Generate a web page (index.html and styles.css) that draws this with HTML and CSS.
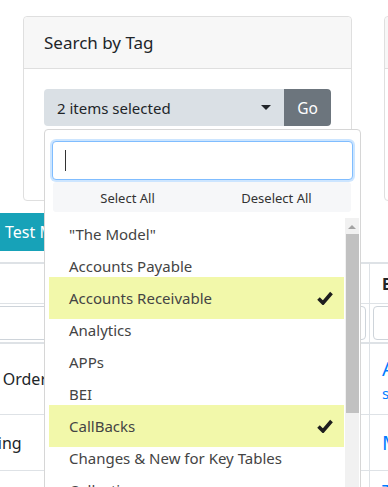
FILE: index.html
```html
<!DOCTYPE html>
<html lang="en">
<head>
  <meta charset="UTF-8" />
  <meta name="viewport" content="width=device-width, initial-scale=1.0"/>
  <title>Search by Tag</title>
  <link rel="stylesheet" href="styles.css">
</head>
<body>
  <div class="top-row">
    <div class="card tag-card">
      <div class="card-header">Search by Tag</div>
      <div class="card-body">
        <div class="tag-picker">
          <div class="input-group">
            <button class="select-toggle" type="button">
              <span>2 items selected</span>
              <span class="caret"></span>
            </button>
            <button class="btn-go" type="button">Go</button>
          </div>

          <!-- open multiselect menu -->
          <div class="dropdown">
            <div class="search-box">
              <input type="text" class="search-input">
            </div>
            <div class="actions">
              <button type="button">Select All</button>
              <button type="button">Deselect All</button>
            </div>
            <div class="list-wrap">
              <ul class="options">
                <li>"The Model"</li>
                <li>Accounts Payable</li>
                <li class="selected">Accounts Receivable <svg class="check" viewBox="0 0 16 14"><path d="M1.5 7.5 L6 12 L14.5 2" /></svg></li>
                <li>Analytics</li>
                <li>APPs</li>
                <li>BEI</li>
                <li class="selected">CallBacks <svg class="check" viewBox="0 0 16 14"><path d="M1.5 7.5 L6 12 L14.5 2" /></svg></li>
                <li>Changes &amp; New for Key Tables</li>
                <li>Collections</li>
                <li>Customers</li>
                <li>Dashboards</li>
                <li>Data Quality</li>
                <li>Finance</li>
                <li>General Ledger</li>
              </ul>
              <div class="scrollbar">
                <div class="scroll-up"></div>
                <div class="scroll-thumb"></div>
              </div>
            </div>
          </div>
        </div>
      </div>
    </div>
    <div class="card side-card">
      <div class="card-header">&nbsp;</div>
    </div>
  </div>

  <div class="results">
    <div class="toolbar">
      <button class="btn-test" type="button">Test Mode</button>
    </div>
    <table class="report">
      <thead>
        <tr>
          <th class="col-name"><span class="sort"></span></th>
          <th class="col-desc">Business</th>
        </tr>
        <tr class="filters">
          <th class="col-name"><input type="text"></th>
          <th class="col-desc"><input type="text"></th>
        </tr>
      </thead>
      <tbody>
        <tr class="tall">
          <td class="col-name">Sales Orders</td>
          <td class="col-desc"><a href="#" class="big">AR</a><br><a href="#">see details</a></td>
        </tr>
        <tr class="mid">
          <td class="col-name">Banking</td>
          <td class="col-desc"><a href="#" class="big">Margin</a></td>
        </tr>
        <tr>
          <td class="col-name">Tax</td>
          <td class="col-desc"><a href="#" class="big">Tax</a></td>
        </tr>
      </tbody>
    </table>
  </div>
</body>
</html>
```

FILE: styles.css
```css
html, body {
  margin: 0;
  padding: 0;
}

body {
  font-family: "Noto Sans", "Open Sans", sans-serif;
  color: #212529;
  background: #fff;
  overflow: hidden;
}

button {
  font-family: inherit;
  border: none;
  cursor: pointer;
}

/* top cards */
.top-row {
  display: flex;
  gap: 32px;
  padding: 16px 0 0 23px;
}

.card {
  border: 1px solid #dfdfdf;
  border-radius: 4px;
  background: #fff;
  flex-shrink: 0;
}

.tag-card {
  width: 327px;
  height: 183px;
}

.side-card {
  width: 300px;
  height: 183px;
}

.card-header {
  background: #f7f7f7;
  border-bottom: 1px solid #dfdfdf;
  padding: 12px 20px;
  font-size: 17px;
  line-height: 27px;
  border-radius: 4px 4px 0 0;
}

.card-body {
  padding: 20px;
}

.tag-picker {
  position: relative;
}

.input-group {
  display: flex;
  height: 37px;
}

.select-toggle {
  width: 241px;
  display: flex;
  align-items: center;
  justify-content: space-between;
  padding: 0 13px;
  background: #dae0e5;
  color: #212529;
  font-size: 15px;
  border-radius: 4px 0 0 4px;
}

.caret {
  width: 0;
  height: 0;
  border-left: 5px solid transparent;
  border-right: 5px solid transparent;
  border-top: 5px solid #212529;
}

.btn-go {
  width: 47px;
  background: #6c757d;
  color: #fff;
  font-size: 15.5px;
  border-radius: 0 4px 4px 0;
}

/* dropdown menu */
.dropdown {
  position: absolute;
  top: 40px;
  left: 0;
  width: 314px;
  height: 400px;
  background: #fff;
  border: 1px solid #d6d6d6;
  border-radius: 4px;
  padding: 11px 1px 0 0;
  z-index: 10;
}

.search-box {
  position: relative;
  margin: 0 6px 0 7px;
}

.search-input {
  display: block;
  width: 100%;
  height: 39px;
  box-sizing: border-box;
  border: 1px solid #80bdff;
  border-radius: 4px;
  box-shadow: 0 0 0 2px rgba(0, 123, 255, 0.2);
  outline: none;
  padding: 0 12px;
  font-size: 15px;
}

.search-box::after {
  content: "";
  position: absolute;
  left: 13px;
  top: 9px;
  width: 1px;
  height: 21px;
  background: #333;
}

.actions {
  display: flex;
  margin: 2px 8px 0 8px;
  height: 30px;
  background: #f6f7f9;
  border-radius: 3px;
}

.actions button {
  flex: 1;
  background: transparent;
  font-size: 13px;
  color: #333;
  padding: 2px 0 0;
}

.list-wrap {
  display: flex;
  margin-top: 6px;
  height: 300px;
}

.options {
  flex: 1;
  list-style: none;
  margin: 0;
  padding: 0 1px 0 4px;
  overflow: hidden;
}

.options li {
  display: flex;
  align-items: center;
  justify-content: space-between;
  height: 32px;
  padding: 0 11px 0 20px;
  font-size: 15px;
  color: #444;
  white-space: nowrap;
}

.options li.selected {
  background: #f2f8aa;
  height: 42px;
  margin: -5px 0;
}

.check {
  width: 16px;
  height: 14px;
}

.check path {
  fill: none;
  stroke: #1e1e1e;
  stroke-width: 3.6;
}

.scrollbar {
  width: 14px;
  background: #f1f1f1;
  display: flex;
  flex-direction: column;
  align-items: center;
}

.scroll-up {
  margin-top: 7px;
  width: 0;
  height: 0;
  border-left: 4px solid transparent;
  border-right: 4px solid transparent;
  border-bottom: 4px solid #a3a3a3;
}

.scroll-thumb {
  margin-top: 5px;
  width: 13px;
  height: 179px;
  background: #c1c1c1;
}

/* results section under the cards */
.results {
  margin-left: -52px;
}

.toolbar {
  margin-top: 12px;
  padding-left: 45px;
}

.btn-test {
  height: 38px;
  padding: 0 12px;
  background: #17a2b8;
  color: #fff;
  font-size: 16px;
  border-radius: 4px;
}

.report {
  margin-top: 11px;
  border-collapse: collapse;
  width: 700px;
  font-size: 16px;
}

.report th,
.report td {
  border-top: 1px solid #dee2e6;
  border-right: 1px solid #dee2e6;
  padding: 0 12px 0 12px;
  text-align: left;
  vertical-align: middle;
}

.report thead tr:first-child th {
  border-top-width: 2px;
  height: 39px;
  font-weight: bold;
}

.report .filters th {
  height: 38px;
  border-bottom: 2px solid #dee2e6;
  padding: 0 3px;
}

.filters input {
  display: block;
  width: 100%;
  box-sizing: border-box;
  height: 34px;
  border: 1px solid #ced4da;
  border-radius: 4px;
}

.col-name {
  width: 397px;
}

.report th.col-name {
  text-align: right;
}

.sort {
  display: inline-block;
  width: 0;
  height: 0;
  border-top: 6px solid transparent;
  border-bottom: 6px solid transparent;
  border-left: 5px solid #ddd;
}

.col-desc {
  padding-left: 9px;
}

.report tr.tall td {
  height: 70px;
}

.report tr.mid td {
  height: 55px;
}

.report tr td {
  height: 40px;
}

.report a {
  color: #007bff;
  text-decoration: none;
  font-size: 15px;
}

.report a.big {
  font-size: 20px;
}
```
